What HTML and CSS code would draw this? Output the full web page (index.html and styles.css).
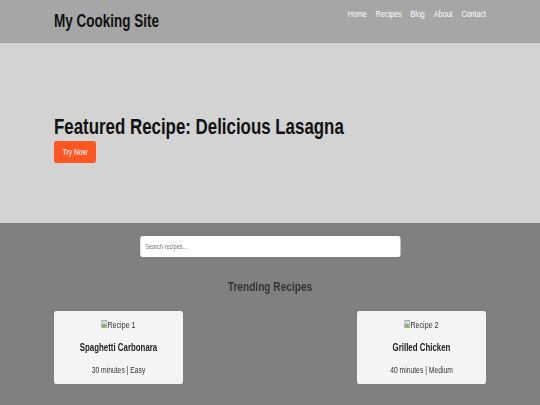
FILE: index.html
```html
<!DOCTYPE html>
<html lang="en">
<head>
    <meta charset="UTF-8">
    <meta name="viewport" content="width=device-width, initial-scale=1.0">
    <title>My Cooking Site</title>
    <link rel="stylesheet" href="styles.css">
</head>
<body>
    <div class="frame">
        <div class="page">
            <header class="site-header">
                <div class="container header-inner">
                    <h1 class="logo">My Cooking Site</h1>
                    <nav class="nav">
                        <a href="#">Home</a>
                        <a href="#">Recipes</a>
                        <a href="#">Blog</a>
                        <a href="#">About</a>
                        <a href="#">Contact</a>
                    </nav>
                </div>
            </header>

            <section class="hero">
                <div class="container">
                    <h2>Featured Recipe: Delicious Lasagna</h2>
                    <button class="btn">Try Now</button>
                </div>
            </section>

            <main class="content">
                <div class="search">
                    <input type="text" placeholder="Search recipes...">
                </div>
                <h3 class="section-title">Trending Recipes</h3>
                <div class="container cards">
                    <div class="card">
                        <div class="broken-img"><span class="img-icon"></span>Recipe 1</div>
                        <h4>Spaghetti Carbonara</h4>
                        <p>30 minutes | Easy</p>
                    </div>
                    <div class="card">
                        <div class="broken-img"><span class="img-icon"></span>Recipe 2</div>
                        <h4>Grilled Chicken</h4>
                        <p>40 minutes | Medium</p>
                    </div>
                </div>
            </main>
        </div>
    </div>
</body>
</html>
```

FILE: styles.css
```css
html, body {
    overflow: hidden;
}
body {
    margin: 0;
    background-color: #808080;
    font-family: 'Liberation Sans', Arial, sans-serif;
}
.frame {
    width: 540px;
    height: 405px;
    overflow: hidden;
}
/* page is laid out at 720px wide and squeezed into the 540px window */
.page {
    width: 720px;
    transform: scaleX(0.75);
    transform-origin: 0 0;
}
.container {
    width: 80%;
    margin: 0 auto;
}
.site-header {
    background-color: #a6a6a6;
    height: 43px;
}
.header-inner {
    display: flex;
    justify-content: space-between;
    align-items: flex-start;
}
.logo {
    margin: 11px 0 0;
    font-size: 18px;
    color: #111;
    line-height: 20px;
}
.nav {
    display: flex;
    gap: 12px;
    padding-top: 8px;
}
.nav a {
    color: #fff;
    text-decoration: none;
    font-size: 9.5px;
}
.hero {
    background-color: #d3d3d3;
    height: 180px;
    box-sizing: border-box;
    padding-top: 71px;
}
.hero h2 {
    margin: 0 0 1px;
    font-size: 22.5px;
    color: #111;
    line-height: 26px;
}
.btn {
    background-color: #ff5722;
    color: #fff;
    border: none;
    border-radius: 3px;
    font-family: inherit;
    font-size: 9px;
    width: 56px;
    height: 22px;
    padding: 0;
}
.content {
    padding-top: 13px;
}
.search {
    display: flex;
    justify-content: center;
}
.search input {
    width: 347px;
    height: 21px;
    box-sizing: border-box;
    border: none;
    border-radius: 3px;
    padding: 0 7px;
    font-family: inherit;
    font-size: 7.5px;
}
.search input::placeholder {
    color: #777;
}
.section-title {
    text-align: center;
    margin: 22px 0 17px;
    font-size: 13.5px;
    color: #333;
}
.cards {
    display: flex;
    justify-content: space-between;
}
.card {
    width: 172px;
    height: 73px;
    background-color: #f4f4f4;
    border-radius: 3px;
    text-align: center;
    box-sizing: border-box;
    padding-top: 3px;
}
.broken-img {
    font-size: 9.5px;
    color: #333;
    display: inline-flex;
    align-items: center;
}
.img-icon {
    width: 8px;
    height: 8px;
    border: 1px solid #aaa;
    box-sizing: border-box;
    background: linear-gradient(#cde 50%, #8b6 50%);
}
.card h4 {
    margin: 9px 0 0;
    font-size: 10.5px;
    color: #222;
}
.card p {
    margin: 12px 0 0;
    font-size: 9px;
    color: #333;
}
```
